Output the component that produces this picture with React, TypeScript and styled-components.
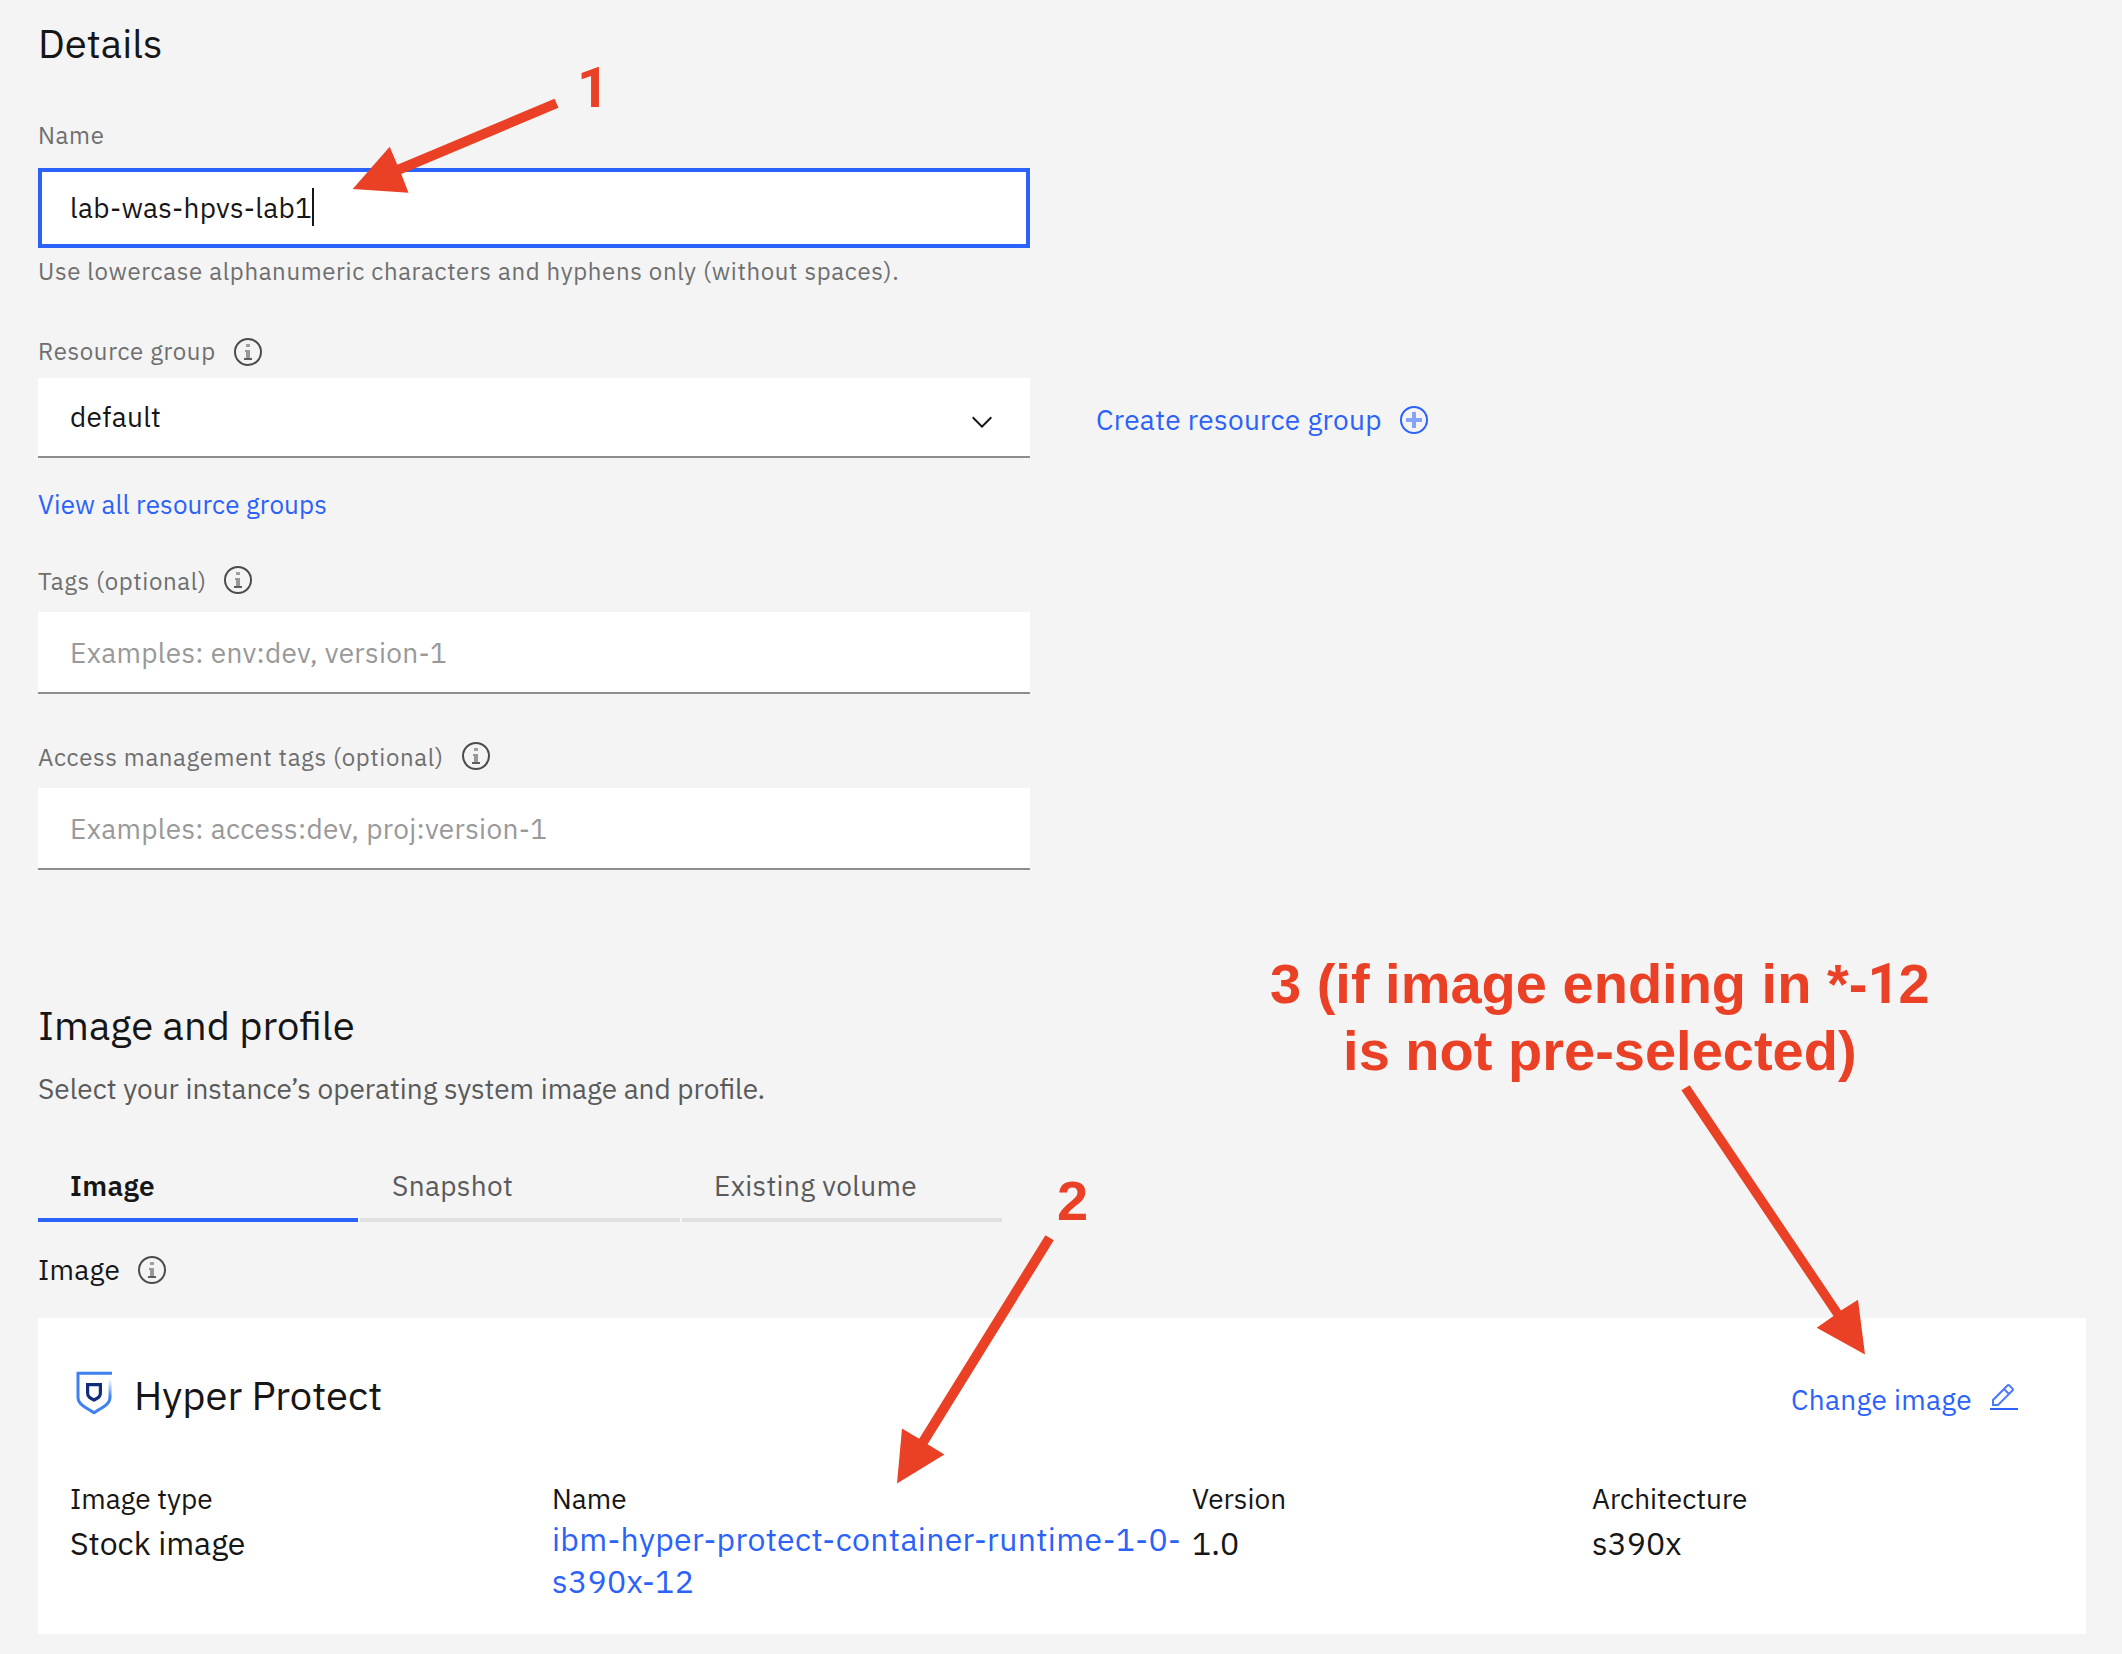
import React from 'react';
import styled, { createGlobalStyle } from 'styled-components';

const ink = '#161616';
const blue = '#2b62f9';
const red = '#ea4025';

const GlobalStyle = createGlobalStyle`
  *, *::before, *::after { box-sizing: border-box; }
  html, body { margin: 0; background: #f4f4f4; }
  body {
    font-family: "IBM Plex Sans", Roboto, "Liberation Sans", sans-serif;
    color: ${ink};
  }
  h1, h2, h3, p, dl, dt, dd { margin: 0; font-weight: 400; }
  a { color: ${blue}; text-decoration: none; }
`;

const Page = styled.main`
  position: relative;
  width: 2122px;
  height: 1654px;
  padding: 15px 36px 0 38px;
  overflow: hidden;
  background: #f4f4f4;
`;

const Section = styled.section<{ $top?: number }>`
  display: flex;
  flex-direction: column;
  margin-top: ${(p) => p.$top ?? 0}px;
`;

const Heading = styled.h2`
  font-size: 40px;
  line-height: 56px;
`;

const Field = styled.div<{ $top: number; $gap: number }>`
  display: flex;
  flex-direction: column;
  gap: ${(p) => p.$gap}px;
  width: 992px;
  margin-top: ${(p) => p.$top}px;
`;

const LabelRow = styled.div<{ $gap?: number }>`
  display: flex;
  align-items: center;
  gap: ${(p) => p.$gap ?? 16}px;
  height: 32px;
`;

const Label = styled.label`
  font-size: 24px;
  line-height: 32px;
  letter-spacing: 0.64px;
  color: #6f6f6f;
  white-space: nowrap;
`;

const FocusedInput = styled.div`
  display: flex;
  align-items: center;
  height: 80px;
  padding: 0 28px 1px;
  border: 4px solid ${blue};
  background: #fff;
  font-size: 28px;
  line-height: 36px;
  letter-spacing: 0.32px;
`;

const Caret = styled.span`
  width: 2px;
  height: 38px;
  margin-top: -1px;
  background: ${ink};
`;

const Helper = styled.p`
  margin-top: 7px;
  font-size: 24px;
  line-height: 32px;
  letter-spacing: 0.64px;
  color: #6f6f6f;
`;

const SelectRow = styled.div`
  display: flex;
  align-items: center;
  gap: 66px;
  margin-top: 11px;
`;

const Select = styled.div`
  display: flex;
  align-items: center;
  justify-content: space-between;
  width: 992px;
  height: 80px;
  padding: 0 32px;
  border-bottom: 2px solid #8d8d8d;
  background: #fff;
  font-size: 28px;
  line-height: 36px;
  letter-spacing: 0.32px;
`;

const TagInput = styled.div`
  display: flex;
  align-items: center;
  height: 82px;
  padding: 2px 32px 0;
  border-bottom: 2px solid #8d8d8d;
  background: #fff;
  font-size: 28px;
  line-height: 36px;
  letter-spacing: 0.32px;
  color: #999;
`;

const ActionLink = styled.a<{ $drop: number }>`
  display: flex;
  align-items: center;
  gap: 16px;
  padding-top: ${(p) => p.$drop}px;
  font-size: 28px;
  line-height: 36px;
  letter-spacing: 0.32px;
  white-space: nowrap;
`;

const SmallLink = styled.a`
  margin-top: 28px;
  font-size: 26px;
  line-height: 36px;
  letter-spacing: 0.16px;
`;

const Subtitle = styled.p`
  margin-top: 18px;
  font-size: 28px;
  line-height: 36px;
  color: #5a5a5a;
`;

const Tabs = styled.div`
  display: flex;
  gap: 2px;
  margin-top: 33px;
`;

const Tab = styled.div<{ $active?: boolean }>`
  width: 320px;
  height: 82px;
  padding: 28px 32px 0;
  border-bottom: 4px solid ${(p) => (p.$active ? blue : '#e0e0e0')};
  color: ${(p) => (p.$active ? ink : '#5a5a5a')};
  font-size: 28px;
  font-weight: ${(p) => (p.$active ? 600 : 400)};
  line-height: 36px;
  letter-spacing: ${(p) => (p.$active ? 0.4 : 0.36)}px;
`;

const ImageLabel = styled.div`
  display: flex;
  align-items: center;
  gap: 16px;
  height: 36px;
  margin-top: 30px;
  font-size: 28px;
  line-height: 36px;
  letter-spacing: 0.32px;
`;

const Card = styled.article`
  width: 2048px;
  height: 316px;
  margin-top: 30px;
  padding: 49px 66px 0 32px;
  background: #fff;
`;

const CardHeader = styled.header`
  display: flex;
  align-items: center;
  justify-content: space-between;
  height: 56px;
`;

const CardTitle = styled.div`
  display: flex;
  align-items: center;
  gap: 22px;
  padding-left: 6px;
`;

const Facts = styled.dl`
  display: grid;
  grid-template-columns: 482px 640px 400px 1fr;
  margin-top: 58px;
`;

const FactName = styled.dt`
  font-size: 28px;
  line-height: 36px;
`;

const FactValue = styled.dd<{ $link?: boolean }>`
  margin-top: ${(p) => (p.$link ? 1 : 5)}px;
  font-size: 32px;
  line-height: 42px;
  letter-spacing: ${(p) => (p.$link ? 0.34 : 0)}px;
  white-space: nowrap;
`;

const Glyph = styled.svg<{ $shift?: number }>`
  flex: none;
  display: block;
  margin-top: ${(p) => p.$shift ?? 0}px;
`;

const Arrows = styled.svg`
  position: absolute;
  inset: 0;
  fill: ${red};
`;

const Note = styled.div<{ $x: number; $y: number }>`
  position: absolute;
  left: ${(p) => p.$x}px;
  top: ${(p) => p.$y}px;
  color: ${red};
  font: 700 56px/67px "Liberation Sans", Arial, sans-serif;
  text-align: center;
  white-space: nowrap;
`;

const One = styled.span`
  font-family: Roboto, sans-serif;
  letter-spacing: -1px;
  line-height: 1;
`;

const InfoIcon = ({ shift }: { shift?: number }) => (
  <Glyph width="32" height="32" viewBox="0 0 32 32" $shift={shift}>
    <circle cx="16" cy="16" r="13" fill="none" stroke="#4c4c4c" strokeWidth="2" />
    <rect x="14" y="8" width="4" height="3" fill="#4c4c4c" opacity="0.5" />
    <path d="M13 14h5v8h-4v-6h-1z" fill="#4c4c4c" opacity="0.55" />
    <path d="M12 22h8v2h-8z" fill="#4c4c4c" opacity="0.9" />
  </Glyph>
);

const ChevronIcon = () => (
  <Glyph width="32" height="32" viewBox="0 0 16 16" $shift={9} fill={ink}>
    <path d="M8 11L3 6l.7-.7L8 9.6l4.3-4.3.7.7z" />
  </Glyph>
);

const AddIcon = () => (
  <Glyph width="32" height="32" viewBox="0 0 32 32">
    <circle cx="16" cy="16" r="13" fill="none" stroke={blue} strokeWidth="2" />
    <path d="M14 8h4v6h6v4h-6v6h-4v-6H8v-4h6z" fill={blue} opacity="0.55" />
  </Glyph>
);

const EditIcon = () => (
  <Glyph width="32" height="32" viewBox="0 0 32 32" fill={blue} $shift={-4}>
    <path d="M2 26h28v2H2z" />
    <path
      opacity="0.85"
      d="M25.4 9c.8-.8.8-2 0-2.8l-3.6-3.6c-.8-.8-2-.8-2.8 0l-15 15V24h6.4zM20.4 4L24 7.6l-3 3L17.4 7zM6 22v-3.6l10-10 3.6 3.6-10 10z"
    />
  </Glyph>
);

const ShieldIcon = () => (
  <Glyph width="36" height="44" viewBox="0 0 36 44" fill="none" $shift={-5}>
    <defs>
      <linearGradient id="edge" gradientUnits="userSpaceOnUse" x1="0" y1="8" x2="0" y2="26">
        <stop offset="0" stopColor="#4a90ee" stopOpacity="0" />
        <stop offset="1" stopColor="#3a78f0" />
      </linearGradient>
    </defs>
    <path d="M36 2.2H2V26C2 33 8 36 18 41.6 28 36 34 33 34 26" stroke="#3f80f2" strokeWidth="3" />
    <path d="M34 26.2V8" stroke="url(#edge)" strokeWidth="3" />
    <path d="M11.6 13.6h12.8V22c0 4-2.6 5.2-6.4 7-3.8-1.8-6.4-3-6.4-7z" stroke="#122c7c" strokeWidth="3.2" />
  </Glyph>
);

export default function App() {
  return (
    <>
      <GlobalStyle />
      <Page>
        <Section>
          <Heading>Details</Heading>

          <Field $top={48} $gap={17}>
            <Label>Name</Label>
            <FocusedInput>
              lab-was-hpvs-lab1
              <Caret />
            </FocusedInput>
          </Field>
          <Helper>Use lowercase alphanumeric characters and hyphens only (without spaces).</Helper>

          <Field $top={48} $gap={0}>
            <LabelRow>
              <Label>Resource group</Label>
              <InfoIcon shift={2} />
            </LabelRow>
          </Field>
          <SelectRow>
            <Select>
              default
              <ChevronIcon />
            </Select>
            <ActionLink $drop={4}>
              Create resource group
              <AddIcon />
            </ActionLink>
          </SelectRow>
          <SmallLink>View all resource groups</SmallLink>

          <Field $top={43} $gap={15}>
            <LabelRow $gap={15}>
              <Label>Tags (optional)</Label>
              <InfoIcon shift={-2} />
            </LabelRow>
            <TagInput>Examples: env:dev, version-1</TagInput>
          </Field>

          <Field $top={47} $gap={15}>
            <LabelRow>
              <Label>Access management tags (optional)</Label>
              <InfoIcon shift={-2} />
            </LabelRow>
            <TagInput>Examples: access:dev, proj:version-1</TagInput>
          </Field>
        </Section>

        <Section $top={127}>
          <Heading>Image and profile</Heading>
          <Subtitle>Select your instance’s operating system image and profile.</Subtitle>
          <Tabs>
            <Tab $active>Image</Tab>
            <Tab>Snapshot</Tab>
            <Tab>Existing volume</Tab>
          </Tabs>
          <ImageLabel>
            Image
            <InfoIcon />
          </ImageLabel>

          <Card>
            <CardHeader>
              <CardTitle>
                <ShieldIcon />
                <Heading>Hyper Protect</Heading>
              </CardTitle>
              <ActionLink $drop={9}>
                Change image
                <EditIcon />
              </ActionLink>
            </CardHeader>
            <Facts>
              <div>
                <FactName>Image type</FactName>
                <FactValue>Stock image</FactValue>
              </div>
              <div>
                <FactName>Name</FactName>
                <FactValue $link>
                  <a>
                    ibm-hyper-protect-container-runtime-1-0-
                    <br />
                    s390x-12
                  </a>
                </FactValue>
              </div>
              <div>
                <FactName>Version</FactName>
                <FactValue>1.0</FactValue>
              </div>
              <div>
                <FactName>Architecture</FactName>
                <FactValue>s390x</FactValue>
              </div>
            </Facts>
          </Card>
        </Section>

        <Arrows width="2122" height="1654" viewBox="0 0 2122 1654">
          <path d="M554.5 98.7L558.5 107.7 401.3 174 408.5 192.7 352.7 189 389.7 146.700 397.3 164.7z" />
          <path d="M1045.4 1235.3L1053.8 1240.3 927.6 1444.2 944.4 1454.5 897 1483.6 902 1428.5 919.2 1438.8z" />
          <path d="M1681.4 1090.2L1689.6 1085.2 1841 1310.5 1858 1299.7 1865 1354.6 1816.7 1327.8 1833.5 1316z" />
        </Arrows>
        <Note $x={577} $y={54}>
          <One>1</One>
        </Note>
        <Note $x={1057} $y={1167}>2</Note>
        <Note $x={1270} $y={950}>
          3 (if image ending in *-<One>1</One>2
          <br />
          is not pre-selected)
        </Note>
      </Page>
    </>
  );
}
